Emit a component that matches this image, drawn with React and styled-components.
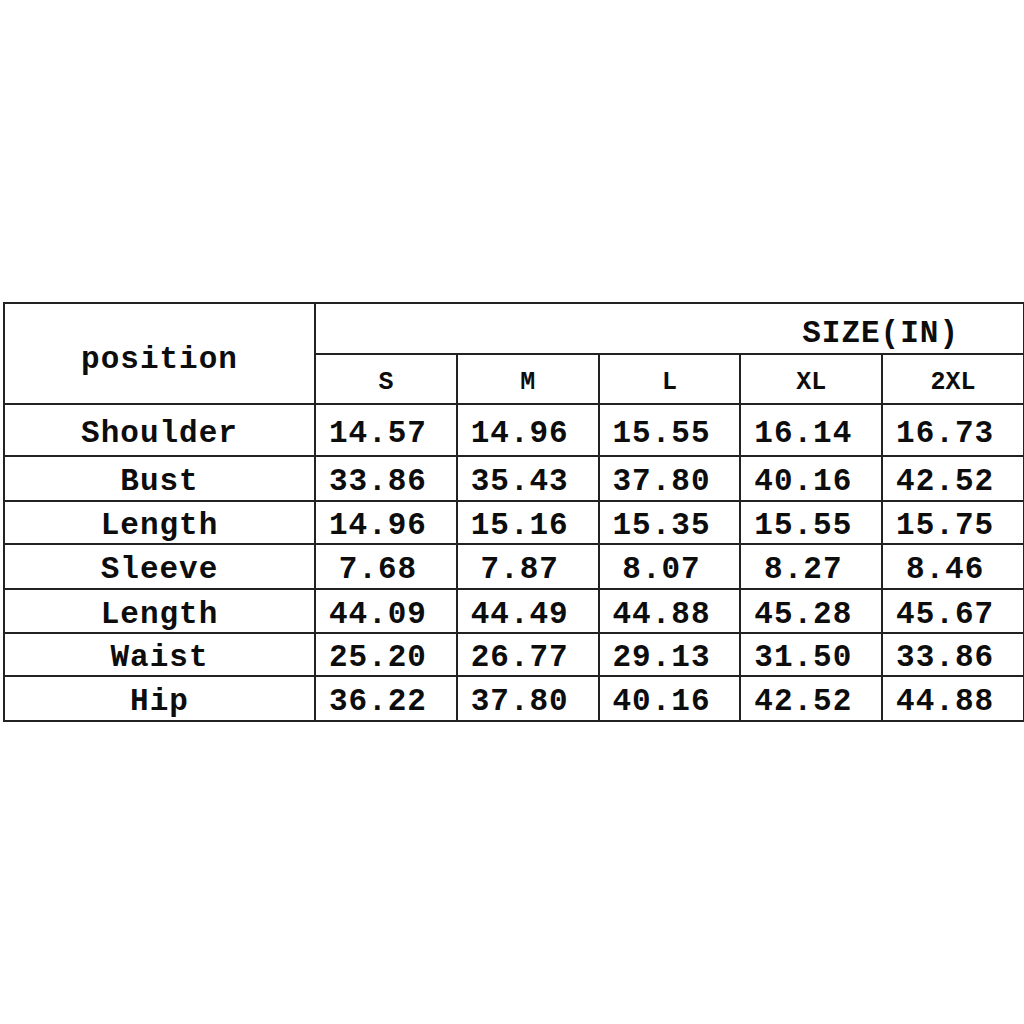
import React from 'react';
import styled, { createGlobalStyle } from 'styled-components';

const GlobalStyle = createGlobalStyle`
    html, body {
        margin: 0;
        padding: 0;
        background: #fff;
        overflow: hidden;
    }
    body {
        width: 1024px;
        height: 1024px;
    }
`;

const Page = styled.main`
    padding: 302px 0 0 3px;
    width: 1024px;
    height: 1024px;
    box-sizing: border-box;
`;

const Table = styled.table`
    border-collapse: collapse;
    table-layout: fixed;
    width: 1022px;
    font-family: "Liberation Mono", "Courier New", monospace;
    font-weight: bold;
    color: #0d0d0d;

    td, th {
        border: 2px solid #222;
        padding: 0;
    }
`;

const Row = styled.tr`
    height: ${p => p.$h}px;
`;

const Position = styled.th`
    width: 309px;
    font-size: 31px;
    letter-spacing: 1px;
    text-align: center;
    vertical-align: middle;
    padding-top: 12px !important;
`;

const SizeTitle = styled.th`
    font-size: 31px;
    letter-spacing: 1px;
    text-align: right;
    vertical-align: bottom;
    padding: 0 64px 2px 0 !important;
`;

const SizeLabel = styled.th`
    font-size: 25px;
    text-align: center;
    vertical-align: middle;
    padding-top: 6px !important;
`;

const Name = styled.td`
    font-size: 31px;
    letter-spacing: 1px;
    text-align: center;
    vertical-align: middle;
    padding-top: 6px !important;
`;

const Value = styled.td`
    font-size: 31px;
    letter-spacing: 1px;
    text-align: center;
    vertical-align: middle;
    padding: 6px 16px 0 0 !important;
`;

const sizes = ['S', 'M', 'L', 'XL', '2XL'];

const rows = [
    { name: 'Shoulder', h: 52, values: ['14.57', '14.96', '15.55', '16.14', '16.73'] },
    { name: 'Bust', h: 45, values: ['33.86', '35.43', '37.80', '40.16', '42.52'] },
    { name: 'Length', h: 43, values: ['14.96', '15.16', '15.35', '15.55', '15.75'] },
    { name: 'Sleeve', h: 45, values: ['7.68', '7.87', '8.07', '8.27', '8.46'] },
    { name: 'Length', h: 44, values: ['44.09', '44.49', '44.88', '45.28', '45.67'] },
    { name: 'Waist', h: 43, values: ['25.20', '26.77', '29.13', '31.50', '33.86'] },
    { name: 'Hip', h: 45, values: ['36.22', '37.80', '40.16', '42.52', '44.88'] },
];

const App = () => {
    return (
        <Page>
            <GlobalStyle />
            <Table>
                <thead>
                    <Row $h={51}>
                        <Position rowSpan={2}>position</Position>
                        <SizeTitle colSpan={5}>SIZE(IN)</SizeTitle>
                    </Row>
                    <Row $h={50}>
                        {sizes.map(s => (
                            <SizeLabel key={s}>{s}</SizeLabel>
                        ))}
                    </Row>
                </thead>
                <tbody>
                    {rows.map((row, i) => (
                        <Row key={i} $h={row.h}>
                            <Name>{row.name}</Name>
                            {row.values.map((v, j) => (
                                <Value key={j}>{v}</Value>
                            ))}
                        </Row>
                    ))}
                </tbody>
            </Table>
        </Page>
    );
};

export default App;
